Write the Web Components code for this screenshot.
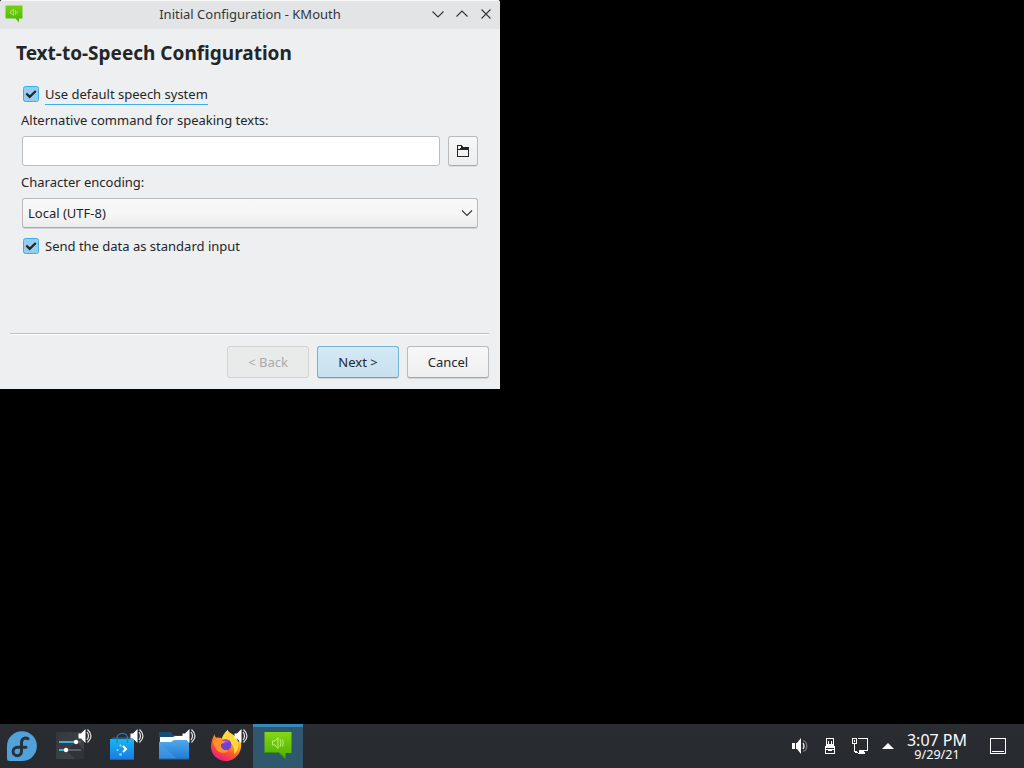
<!DOCTYPE html>
<html lang="en">
<head>
<meta charset="utf-8">
<title>Initial Configuration - KMouth</title>
<style>
html,body{margin:0;height:100%;background:#000;overflow:hidden}
body{font:13px "Noto Sans",sans-serif;color:#232629}
</style>
</head>
<body>
<desk-top>
  <k-window caption="Initial Configuration - KMouth">
    <wizard-page heading="Text-to-Speech Configuration">
      <check-box class="focus">Use default speech system</check-box>
      <field-label>Alternative command for speaking texts:</field-label>
      <file-field></file-field>
      <field-label>Character encoding:</field-label>
      <combo-box>Local (UTF-8)</combo-box>
      <check-box>Send the data as standard input</check-box>
    </wizard-page>
    <push-button slot="actions" class="disabled">&lt; Back</push-button>
    <push-button slot="actions" class="primary">Next &gt;</push-button>
    <push-button slot="actions">Cancel</push-button>
  </k-window>
  <task-bar slot="panel">
    <start-button></start-button>
    <task-item icon="settings" sound></task-item>
    <task-item icon="store" sound></task-item>
    <task-item icon="files" sound></task-item>
    <task-item icon="firefox" sound></task-item>
    <task-item icon="kmouth" class="active"></task-item>
    <system-tray slot="end"></system-tray>
    <tray-clock slot="end" time="3:07 PM" date="9/29/21"></tray-clock>
    <show-desktop slot="end"></show-desktop>
  </task-bar>
</desk-top>
<script>
function define(name, render){
  customElements.define(name, class extends HTMLElement{
    constructor(){ super(); this.attachShadow({mode:'open'}); }
    connectedCallback(){ this.shadowRoot.innerHTML = '<style>*{box-sizing:border-box}svg{display:block}</style>' + render(this); }
  });
}

define('desk-top', () => `<style>
:host{display:flex;flex-direction:column;justify-content:space-between;align-items:flex-start;width:1024px;height:768px;background:#000}
</style><slot></slot><slot name="panel"></slot>`);

define('k-window', el => `<style>
:host{display:flex;flex-direction:column;width:500px;height:389px;background:#eeeff1;border-radius:3px 3px 0 0;overflow:hidden}
header{display:flex;align-items:center;height:29px;flex:none;background:#e3e4e6;border-top:1px solid #f7f7f8;padding:0 6px 2px 5px;color:#31363b}
.cap{flex:1;text-align:center;line-height:18px;padding-left:47px}
.logo{width:18px}
.ctl{display:flex;gap:8px}
.ctl svg{fill:none;stroke:#31363b;stroke-width:1.1}
main{flex:1}
footer{margin:0 11px 11px 10px;border-top:1px solid #bfc1c3;box-shadow:inset 0 1px #fff;padding-top:12px;display:flex;justify-content:flex-end;gap:8px}
</style>
<header>
 <svg class="logo" width="18" height="18" viewBox="0 0 18 18"><defs><linearGradient id="g" x2="0" y2="1"><stop stop-color="#75d30c"/><stop offset="1" stop-color="#4cb50c"/></linearGradient></defs><path d="M.5 .5h17v13H14v4L10.5 13.5H.5z" fill="url(#g)"/><path d="M5.5 6v2.500H7l1.500 2V4L7 6zM10.500 5v5M12 6v3" fill="none" stroke="#b9ea8c" stroke-width=".7"/></svg>
 <span class="cap">${el.getAttribute('caption')}</span>
 <span class="ctl">
  <svg width="16" height="16"><path d="M2.500 5.500 8 11l5.500-5.500"/></svg>
  <svg width="16" height="16"><path d="M2.500 10.500 8 5l5.500 5.500"/></svg>
  <svg width="16" height="16"><path d="m3.500 3.500 9 9m0-9-9 9"/></svg>
 </span>
</header>
<main><slot></slot></main><footer><slot name="actions"></slot></footer>`);

define('wizard-page', el => `<style>
:host{display:block;padding:9px 22px 0 22px}
h1{font-size:19px;line-height:30px;font-weight:700;margin:0 0 16px -6px}
</style><h1>${el.getAttribute('heading')}</h1><slot></slot>`);

define('check-box', () => `<style>
:host{display:flex;height:20px;padding-left:1px;gap:6px;align-items:flex-start}
.box{width:16px;height:16px;margin-top:2px;border:1px solid #3daee9;border-radius:2.5px;background:#95cdec}
span{line-height:20px;height:21px}
:host(.focus) span{border-bottom:1px solid #3daee9}
</style><div class="box"><svg width="14" height="14" viewBox="0 0 14 14"><path d="m2.300 6.500 3.400 3.400L11.800 4" fill="none" stroke="#232629" stroke-width="2.200"/></svg></div><span><slot></slot></span>`);

define('field-label', () => `<style>:host{display:block;line-height:20px;height:20px;margin:6px 0 6px -1px}</style><slot></slot>`);

define('file-field', () => `<style>
:host{display:flex;gap:8px;height:30px}
.input{flex:1;border:1px solid #babcbe;border-radius:3px;background:#fff}
.browse{width:30px;border:1px solid #b8babc;border-bottom-color:#a9abad;border-radius:3px;background:linear-gradient(#f8f8f8,#ededee);box-shadow:0 1px #dcddde;display:flex;align-items:center;justify-content:center}
</style><div class="input"></div><div class="browse"><svg width="12" height="12" shape-rendering="crispEdges"><path fill="#232629" d="M0 0h5v1h1v1h6v10H0zM1 1v3h2V3h1V1zM1 5v6h10V5z" fill-rule="evenodd"/></svg></div>`);

define('combo-box', () => `<style>
:host{display:flex;align-items:center;justify-content:space-between;box-sizing:border-box;height:30px;margin-bottom:8px;padding:0 4px 0 5px;border:1px solid #b8babc;border-bottom-color:#a5a7a9;border-radius:3px;background:linear-gradient(#f8f8f8 0,#f6f6f6 50%,#ececed);box-shadow:0 1px #d3d4d6}
span{line-height:20px}
</style><span><slot></slot></span><svg width="12" height="12"><path d="M1 3.500 6 8.500 11 3.500" fill="none" stroke="#31363b" stroke-width="1.100"/></svg>`);

define('push-button', () => `<style>
:host{display:flex;align-items:center;justify-content:center;box-sizing:border-box;width:82px;height:32px;line-height:20px;border:1px solid #b8babc;border-bottom-color:#a5a7a9;border-radius:3px;background:linear-gradient(#f8f8f8,#eeeeef);box-shadow:0 1px #d3d4d6}
:host(.primary){background:linear-gradient(#d3e9f4,#c9e0ee);border-color:#75b1d2;border-bottom-color:#65a1c2}
:host(.disabled){background:#e9eaea;border-color:#d3d5d5;color:#a8aaac;box-shadow:none}
</style><slot></slot>`);

define('task-bar', () => `<style>
:host{display:flex;width:1024px;height:44px;background:linear-gradient(#292c31,#272a2f);justify-content:space-between}
div{display:flex}.l{gap:2px}
</style><div class="l"><slot></slot></div><div><slot name="end"></slot></div>`);

define('start-button', () => `<style>:host{display:block;width:43px}</style>
<svg width="43" height="44"><path d="M22 7.200a14.900 14.900 0 1 1 0 29.800H9.500Q7 37 7 34.500V22A14.900 14.900 0 0 1 22 7.200z" fill="#51a2da"/><path d="M28 14.800C25 13 21.500 15 21.500 18.500V27.500a4.200 4.200 0 1 1-4.200-4.200H26" fill="none" stroke="#27323c" stroke-width="3" stroke-linecap="round"/></svg>`);

const icons = {
settings:`<defs><linearGradient id="s" x2="1" y2="1"><stop stop-color="#34383c"/><stop offset="1" stop-color="#43474b"/></linearGradient></defs><path d="M11 8h28v28H11z" fill="url(#s)"/><path d="m22 27 9-9 8 8v10h-8z" fill="#303438"/><path d="M11 35h28v1H11z" fill="#292d30"/><path d="M14 18h17M14 26h7" stroke="#3daee9" stroke-width="2"/><path d="M31 18h5M22 26h14" stroke="#5c6166" stroke-width="2"/><circle cx="31" cy="18" r="2.200" fill="#fff"/><circle cx="21" cy="26" r="2.200" fill="#fff"/>`,
store:`<defs><linearGradient id="b" x2="0" y2="1"><stop stop-color="#19b5f5"/><stop offset="1" stop-color="#1c79dd"/></linearGradient></defs><path d="M13 16l3-3h18l3 3z" fill="#185880"/><path d="M13 15h24v21H13z" fill="url(#b)"/><path d="M20 19v-5.500Q20.500 10 24.500 9.500h2Q30 10 30.500 13.500V19" fill="none" stroke="#2583b5" stroke-width="1.200"/><path d="M13 35h24v1H13z" fill="#1761b4"/><path d="m26 22 3 3-3 3" fill="none" stroke="#fff" stroke-width="2"/><g fill="#9ddcff"><circle cx="23.500" cy="21.500" r="1.100"/><circle cx="20.500" cy="26" r="1"/><circle cx="23.500" cy="30.500" r="1.300"/></g>`,
files:`<defs><linearGradient id="f" x2="0" y2="1"><stop stop-color="#51a8ed"/><stop offset="1" stop-color="#217ad0"/></linearGradient></defs><path d="M10 8h12l2 3h16v22H10z" fill="#164f75"/><path d="M11 13h13l2-1h13v10H11z" fill="#fff"/><path d="M10 18h12l3-2h15v19H10z" fill="url(#f)"/><path d="m10 18 18 17H10z" fill="#55aced" opacity=".35"/><path d="M10 34.500h30v1H10z" fill="#1766b2"/>`,
firefox:`<defs><linearGradient id="x" x1=".85" x2=".25" y2="1"><stop stop-color="#fff44f"/><stop offset=".35" stop-color="#ffb02a"/><stop offset=".65" stop-color="#ff552e"/><stop offset="1" stop-color="#e61587"/></linearGradient></defs><path d="M13.500 10c0 2 1 3.500 2 3.800 2-.5 4 0 5.500.7 1-3.500 3-6 5.500-8.500 1 2.500 3 3 5 4.500 3 2 5 4.500 5.500 7.500l2.500-2c3 10.500-4 21-14.500 21C16 37 9.500 30 10 22c.1-4.500 1.800-8 3.500-12z" fill="url(#x)"/><path d="M26.500 6c1 2.500 3 3 5 4.500 3 2 5 4.500 5.500 7.500 1 6-1 10-4 12 1-7-1-12-12-15.500 1-3.500 3-6 5.500-8.500z" fill="#ffd83c"/><circle cx="24.800" cy="20.800" r="5.600" fill="#7142d0"/><path d="M20.500 18q3.500-4 8-1.500-2 3-6.500 3z" fill="#a84bd8"/><path d="M11.500 17.500c2-3 6-3.300 9-.8l3.500.5c-.5 1.700-2.500 1.800-4 3-.5 4.300 3 6.800 7.500 6-2.500 4-10.500 3.500-13-2z" fill="#ff9428"/>`,
kmouth:`<defs><linearGradient id="k" x2="0" y2="1"><stop stop-color="#82d914"/><stop offset="1" stop-color="#4caf00"/></linearGradient></defs><path d="M11.500 8h27v21H32.500v6L26 29H11.500z" fill="url(#k)"/><path d="M11.500 28H26l6.500 6v1L26 29H11.500z" fill="#3e9208"/><path d="M19.500 17h2.500l3-3.500v11L22 21h-2.500zM27 15q2 4 0 8M29.500 15.500q1.500 3.500 0 7" fill="none" stroke="#baf07b" stroke-width="1"/>`
};
define('task-item', el => `<style>
:host{display:block;box-sizing:border-box;width:50px;height:44px}
:host(.active){background:#2f586f;box-shadow:inset 0 3px #3689b5}
</style><svg width="50" height="44">${icons[el.getAttribute('icon')]}${el.hasAttribute('sound') ? `<path d="M33.500 9.500H36l4.500-4.500v14L36 14.500h-2.500z" fill="#fff"/><path d="M42 8q3 4 0 8M42.500 5.500q7 6.500 0 13" fill="none" stroke="#e5e6e7" stroke-width="1.200"/>` : ''}</svg>`);

define('system-tray', () => `<style>:host{display:flex;align-items:center;gap:14px;padding-right:11px}</style>
<svg width="16" height="16"><path d="M0 5h3v6H0zM4 5h1l4-5v16l-4-5H4z" fill="#fff"/><path d="M11 5q2 3 0 6" fill="none" stroke="#eee" stroke-width="1.300"/><path d="M11 2.500c5 1.500 5 9.500 0 11" fill="none" stroke="#73767a" stroke-width="1.300"/></svg>
<svg width="16" height="16" shape-rendering="crispEdges"><path fill="#fcfcfc" fill-rule="evenodd" d="M4 0h8v8H4zM5 1v5h1V3h1v3h2V3h1v3h1V1zM3 8h10v8H3zM4 10v1h8v-1zM4 12v3h8v-3zM6 12h4v1H6z"/></svg>
<svg width="16" height="16" shape-rendering="crispEdges"><path fill="#fcfcfc" fill-rule="evenodd" d="M0 0h5v6H0zM1 1v4h3V1zM6 0h10v13H7v-1h8V1H6zM2 2h1v2H2zM2 6h1v7h2v1h2v1H3v-1H2zM7 13h5v1h1v2H6v-2h1z"/></svg>
<svg width="12" height="16"><path d="M0 11 6 5l6 6z" fill="#fcfcfc"/></svg>`);

define('tray-clock', el => `<style>
:host{display:flex;flex-direction:column;align-items:center;justify-content:center;width:64px;color:#fcfcfc;white-space:nowrap}
b{font-weight:400;font-size:16px;line-height:16px;padding-top:1px}i{font-style:normal;font-size:12.6px;line-height:14px}
</style><b>${el.getAttribute('time')}</b><i>${el.getAttribute('date')}</i>`);

define('show-desktop', () => `<style>:host{display:flex;align-items:center;justify-content:center;width:55px;padding-left:2px;box-sizing:border-box}</style>
<svg width="16" height="16" shape-rendering="crispEdges"><path fill="#fcfcfc" fill-rule="evenodd" d="M0 0h16v16H0zM1 1v14h14V1zM2 13h12v1H2z"/></svg>`);
</script>
</body>
</html>
